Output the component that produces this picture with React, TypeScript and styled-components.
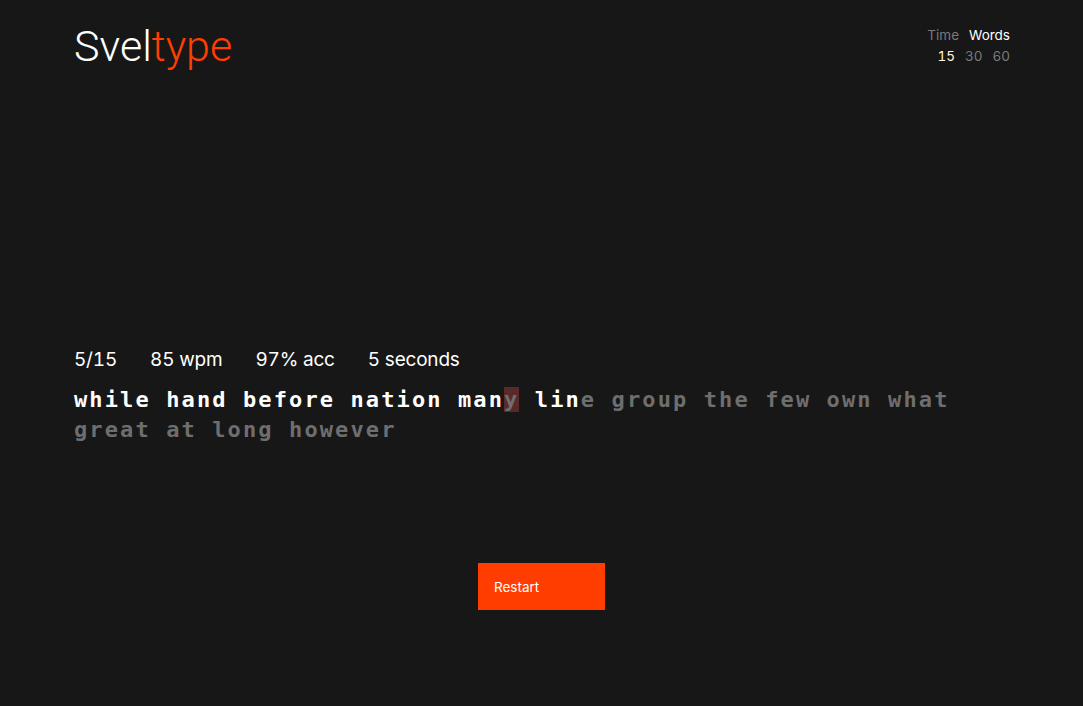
import React from "react";
import styled, { createGlobalStyle } from "styled-components";

const Global = createGlobalStyle`
  html, body { margin: 0; padding: 0; background: #171717; }
  body { font-family: "Inter", "Noto Sans", sans-serif; color: #f5f5f5; }
`;

const Page = styled.div`
  width: 1083px;
  height: 706px;
  background: #171717;
  display: flex;
  flex-direction: column;
  padding: 0 74px;
  box-sizing: border-box;
`;

const Header = styled.header`
  display: flex;
  justify-content: space-between;
  align-items: flex-start;
  padding-top: 20px;
`;

const Logo = styled.h1`
  margin: 0;
  font-family: "Roboto", "Lato", sans-serif;
  font-weight: 300;
  font-size: 43px;
  line-height: 52px;
  color: #ffffff;
  letter-spacing: 0;
`;

const Accent = styled.span`
  color: #ff3e00;
`;

const Modes = styled.div`
  display: grid;
  grid-template-rows: auto auto;
  justify-items: end;
  row-gap: 3px;
  padding-top: 6px;
  margin-right: -1px;
  font-family: "Inter", sans-serif;
  font-size: 13.5px;
  line-height: 18px;
  font-variant-numeric: tabular-nums;
`;

const OptionRow = styled.div`
  display: flex;
  gap: 10px;
`;

const Option = styled.span<{ $active?: boolean; $warm?: boolean }>`
  color: ${(p) => (p.$warm ? "#fff6d8" : p.$active ? "#ffffff" : "#7a7a7a")};
`;

const Main = styled.main`
  display: flex;
  flex-direction: column;
  padding-top: 276px;
`;

const Stats = styled.div`
  display: flex;
  gap: 33px;
  font-family: "Inter", sans-serif;
  font-size: 19px;
  line-height: 24px;
  color: #ffffff;
  letter-spacing: -0.2px;
  font-variant-numeric: tabular-nums;
`;

const Words = styled.div`
  margin-top: 13px;
  width: 940px;
  font-family: "DejaVu Sans Mono", monospace;
  font-size: 22px;
  font-weight: bold;
  line-height: 30px;
  letter-spacing: 2.1px;
  white-space: normal;
`;

const Char = styled.span<{ $state: "typed" | "cursor" | "pending" }>`
  color: ${(p) => (p.$state === "typed" ? "#ffffff" : "#6e6e6e")};
  background: ${(p) => (p.$state === "cursor" ? "#5a2a2a" : "transparent")};
`;

const Footer = styled.div`
  display: flex;
  justify-content: center;
  margin-top: 118px;
`;

const Button = styled.button`
  width: 127px;
  height: 47px;
  border: none;
  background: #ff3d00;
  color: #ffffff;
  font-family: "Inter", sans-serif;
  font-size: 13.5px;
  text-align: left;
  padding: 0 16px;
  cursor: pointer;
`;

const text =
  "while hand before nation many line group the few own what great at long however";
const typedCount = 28; // "while hand before nation man"
const typedSecond = [30, 31, 32]; // "lin"

export default function App() {
  const words = text.split(" ");
  let idx = 0;
  return (
    <>
      <Global />
      <Page>
        <Header>
          <Logo>
            Svel<Accent>type</Accent>
          </Logo>
          <Modes>
            <OptionRow>
              <Option>Time</Option>
              <Option $active>Words</Option>
            </OptionRow>
            <OptionRow>
              <Option $warm>15</Option>
              <Option>30</Option>
              <Option>60</Option>
            </OptionRow>
          </Modes>
        </Header>
        <Main>
          <Stats>
            <span>5/15</span>
            <span>85 wpm</span>
            <span>97% acc</span>
            <span>5 seconds</span>
          </Stats>
          <Words>
            {words.map((w, wi) => {
              const start = idx;
              idx += w.length + 1;
              return (
                <React.Fragment key={wi}>
                  {w.split("").map((c, ci) => {
                    const i = start + ci;
                    const state =
                      i < typedCount || typedSecond.includes(i)
                        ? "typed"
                        : i === typedCount
                        ? "cursor"
                        : "pending";
                    return (
                      <Char key={ci} $state={state}>
                        {c}
                      </Char>
                    );
                  })}
                  {wi < words.length - 1 ? " " : null}
                </React.Fragment>
              );
            })}
          </Words>
        </Main>
        <Footer>
          <Button>Restart</Button>
        </Footer>
      </Page>
    </>
  );
}
